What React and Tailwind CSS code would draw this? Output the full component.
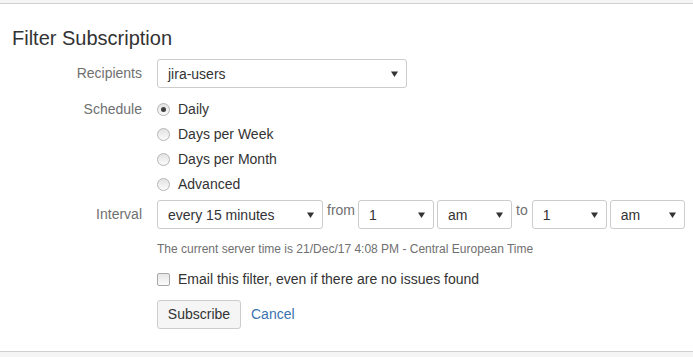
const Arrow = () => (
  <svg width="7" height="6" viewBox="0 0 7 6" className="shrink-0">
    <polygon points="0,0.5 7,0.5 3.5,6" fill="#333" />
  </svg>
);

const Select = ({ value, className }) => (
  <div
    className={`h-[29px] shrink-0 flex items-center justify-between pl-[10px] pr-[8px] border border-[#ccc] rounded-[3px] bg-white text-[14px] text-[#333] ${className}`}
  >
    <span className="pt-[2px]">{value}</span>
    <Arrow />
  </div>
);

const Radio = ({ checked, label }) => (
  <label className="h-[25px] flex items-center gap-[8px] text-[14px] text-[#333]">
    <span className="w-[13px] h-[13px] rounded-full border border-[#b5b5b5] bg-linear-to-b from-[#e2e2e2] to-[#fbfbfb] flex items-center justify-center">
      {checked && <span className="w-[5px] h-[5px] rounded-full bg-[#3f3f3f]"></span>}
    </span>
    {label}
  </label>
);

const Label = ({ children }) => (
  <div className="w-[130px] shrink-0 text-right text-[14px] text-[#707070]">{children}</div>
);

export default function App() {
  return (
    <div
      className="w-[693px] h-[357px] bg-[#f5f5f5] pt-[3px] overflow-hidden"
      style={{ fontFamily: '"Liberation Sans", Arial, sans-serif' }}
    >
      <div className="h-[349px] bg-white border-y border-[#d0d0d0]">
        {/* Title */}
        <h2 className="mt-[22px] ml-[12px] text-[20px] leading-[24px] text-[#333]">Filter Subscription</h2>

        {/* Recipients */}
        <div className="mt-[9px] flex items-center gap-[15px] pl-[12px]">
          <Label>Recipients</Label>
          <Select value="jira-users" className="w-[250px]" />
        </div>

        {/* Schedule */}
        <div className="mt-[9px] flex gap-[15px] pl-[12px]">
          <div className="h-[25px] flex items-center">
            <Label>Schedule</Label>
          </div>
          <div className="flex flex-col">
            <Radio checked label="Daily" />
            <Radio label="Days per Week" />
            <Radio label="Days per Month" />
            <Radio label="Advanced" />
          </div>
        </div>

        {/* Interval */}
        <div className="mt-[3px] flex items-center gap-[15px] pl-[12px]">
          <Label>Interval</Label>
          <div className="flex items-center">
            <Select value="every 15 minutes" className="w-[166px]" />
            <span className="self-start leading-[20px] ml-[4px] mr-[3px] text-[14px] text-[#707070]">from</span>
            <Select value="1" className="w-[76px]" />
            <Select value="am" className="w-[75px] ml-[3px]" />
            <span className="self-start leading-[20px] ml-[4px] mr-[4px] text-[14px] text-[#707070]">to</span>
            <Select value="1" className="w-[75px]" />
            <Select value="am" className="w-[75px] ml-[3px]" />
          </div>
        </div>

        {/* Server time */}
        <div className="mt-[12px] ml-[157px] text-[12px] leading-[16px] text-[#707070]">
          The current server time is 21/Dec/17 4:08 PM - Central European Time
        </div>

        {/* Email checkbox */}
        <label className="mt-[12px] ml-[157px] h-[20px] flex items-center gap-[8px] text-[14px] text-[#333]">
          <span className="w-[13px] h-[13px] rounded-[2px] border border-[#a8a8a8] bg-linear-to-b from-[#e6e6e6] to-[#fbfbfb]"></span>
          Email this filter, even if there are no issues found
        </label>

        {/* Actions */}
        <div className="mt-[11px] ml-[157px] flex items-center gap-[10px]">
          <button
            type="button"
            className="h-[29px] w-[84px] border border-[#ccc] rounded-[3px] bg-[#f5f5f5] text-[14px] text-[#333]"
          >
            Subscribe
          </button>
          <a className="text-[14px] text-[#3b73af]">Cancel</a>
        </div>
      </div>
    </div>
  );
}
